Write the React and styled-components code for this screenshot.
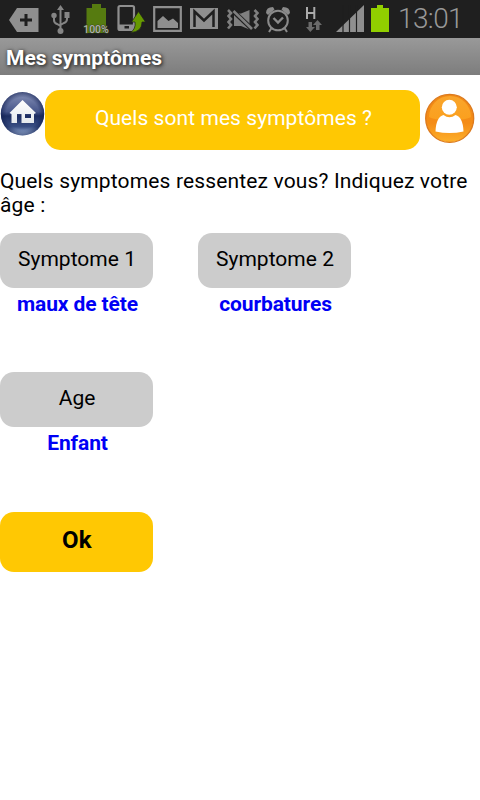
import React from "react";
import styled, { createGlobalStyle } from "styled-components";

const GlobalStyle = createGlobalStyle`
  body {
    margin: 0;
    background: #fff;
    font-family: Roboto, sans-serif;
  }
`;

const Screen = styled.div`
  width: 480px;
  height: 800px;
  overflow: hidden;
  background: #fff;
  color: #000;
`;

const StatusBar = styled.div`
  display: flex;
  height: 38px;
  background: #1f1f1f;
`;

const Icon = styled.svg`
  flex: none;
  display: block;
  height: 38px;
  margin-left: ${(props) => props.$gap}px;
`;

const Clock = styled.span`
  margin-left: 9px;
  color: #989898;
  font-size: 28px;
  font-weight: 300;
  line-height: 37px;
  letter-spacing: -0.6px;
  white-space: nowrap;
`;

const TitleBar = styled.h1`
  height: 37px;
  margin: 0;
  padding-left: 6px;
  background: linear-gradient(#999, #7d7d7d);
  color: #fff;
  font-size: 21px;
  font-weight: 700;
  line-height: 40px;
  text-shadow: 1px 1px 4px #222, 1px 1px 3px #555;
`;

const Header = styled.div`
  display: flex;
  align-items: flex-start;
  padding-top: 15px;
`;

const RoundButton = styled.svg`
  flex: none;
  display: block;
  margin-top: ${(props) => props.$top}px;
  margin-left: ${(props) => props.$left}px;
`;

const Banner = styled.div`
  box-sizing: border-box;
  width: 375px;
  height: 60px;
  padding-left: 2px;
  border-radius: 15px;
  background: #ffc803;
  color: #fff;
  font-size: 21px;
  line-height: 56px;
  text-align: center;
  letter-spacing: 0.06px;
`;

const Question = styled.p`
  margin: 19px 0 16px;
  font-size: 21px;
  line-height: 24px;
  letter-spacing: 0.15px;
`;

const Row = styled.div`
  display: flex;
  gap: 45px;
  height: ${(props) => props.$height}px;
`;

const Field = styled.div`
  width: 153px;
  text-align: center;
`;

const Picker = styled.button`
  display: block;
  width: 153px;
  height: 55px;
  padding: 0 0 3px 1px;
  border: 0;
  border-radius: 14px;
  background: #ccc;
  color: #000;
  font: 21px Roboto, sans-serif;
  letter-spacing: 0.02px;
`;

const Value = styled.div`
  margin-left: 2px;
  color: #0000f5;
  font-size: 21px;
  font-weight: 700;
  line-height: 32px;
  letter-spacing: -0.1px;
  white-space: nowrap;
`;

const OkButton = styled(Picker)`
  height: 60px;
  padding: 0 0 4px 1px;
  background: #ffc803;
  font-size: 24px;
  font-weight: 700;
  letter-spacing: 0.2px;
`;

const StatusIcons = () => (
  <>
    <Icon $gap={9} width="30" viewBox="9 0 30 38">
      <path d="M9 20 17 8H38.500V32H17Z" fill="#8f8f8f" />
      <path d="M26 14V26M20 20H32" stroke="#1f1f1f" strokeWidth="3" />
    </Icon>
    <Icon $gap={12} width="20" viewBox="51 0 20 38">
      <g fill="none" stroke="#858585" strokeWidth="2">
        <path d="M60.500 8V31M54 17V20Q54 23 57 24L60.500 26M67 16V19Q67 22 64 23L60.500 25" />
      </g>
      <g fill="#858585">
        <path d="M60.500 5 64 10H57ZM64.500 12H69.500V18H64.500Z" />
        <circle cx="54" cy="15.500" r="2.700" />
        <circle cx="60.500" cy="31" r="3" />
      </g>
    </Icon>
    <Icon $gap={11} width="28" viewBox="82 0 28 38">
      <path d="M92 4H101V8H106V33H86.500V8H92Z" fill="#567b10" />
      <text
        x="96"
        y="32.500"
        textAnchor="middle"
        fontSize="10.500"
        fontWeight="500"
        fill="#b0b0b0"
        stroke="#3a4a1a"
        strokeWidth="1"
        paintOrder="stroke"
      >
        100%
      </text>
    </Icon>
    <Icon $gap={7} width="29" viewBox="117 0 29 38">
      <path
        d="M118.500 7.500Q118.500 6 120 6H132.500Q134 6 134 7.500V28.500Q134 30 132.500 30H120Q118.500 30 118.500 28.500Z"
        fill="none"
        stroke="#8f8f8f"
        strokeWidth="2.200"
      />
      <path d="M118 24.500H135V30H118Z" fill="#8f8f8f" />
      <path d="M124.500 26H129V28.500H124.500Z" fill="#1f1f1f" />
      <path
        d="M130.500 32.500Q136 29 135 22H131.500L138.500 11.500 145.500 22H142Q142 32 130.500 32.500Z"
        fill="#669900"
        stroke="#1f1f1f"
        strokeWidth="0.700"
      />
    </Icon>
    <Icon $gap={7} width="30" viewBox="153 0 30 38">
      <path d="M154.200 7.200H180.800V30.800H154.200Z" fill="none" stroke="#8f8f8f" strokeWidth="2.200" />
      <path d="M157.500 28V21L163 16 168.500 21 173 18.500 178 23V28Z" fill="#8f8f8f" />
    </Icon>
    <Icon $gap={7} width="28" viewBox="190 0 28 38">
      <path d="M190 8H218V29H190Z" fill="#8f8f8f" />
      <path d="M194.500 27V11.500L204 20.500 213.500 11.500V27" fill="none" stroke="#1f1f1f" strokeWidth="2.500" />
      <path d="M195 9.500H213L204 17Z" fill="#8f8f8f" />
    </Icon>
    <Icon $gap={9} width="32" viewBox="227 0 32 38">
      <path d="M234 13.500H241L249.500 10V29.500L241 26H234Z" fill="#7f7f7f" />
      <path d="M232 10 253 30" stroke="#1f1f1f" strokeWidth="4.500" />
      <g fill="none" stroke="#7f7f7f" strokeWidth="2.600">
        <path d="M233.500 11 252 29" />
        <path d="M228 10 231 13 228.500 16 231 19 228.500 22 231 25 228 28.500" />
        <path d="M254.500 10 257.500 13 255 16 257.500 19 255 22 257.500 25 254.500 28.500" />
      </g>
    </Icon>
    <Icon $gap={7} width="25" viewBox="266 0 25 38">
      <g fill="none" stroke="#8a8a8a" strokeWidth="2">
        <circle cx="278" cy="20.500" r="9.800" />
        <path d="M271.500 28 269 32M284.500 28 287 32" />
        <path d="M273.500 18 278 22.500 283 17.500" strokeWidth="2.400" />
      </g>
      <path d="M266 13Q266 7 273 7L274.500 9.500 268 15ZM290 13Q290 7 283 7L281.500 9.500 288 15Z" fill="#8a8a8a" />
    </Icon>
    <Icon $gap={13} width="18" viewBox="304 0 18 38">
      <path d="M307 7V19M314.300 7V19M307 13H314.300" stroke="#ababab" strokeWidth="2" />
      <path
        d="M308.500 22H312V27H315L310.300 32 306 27H308.500ZM316 30V25H313L317.500 20 322 25H319.500V30Z"
        fill="#6b6b6b"
      />
    </Icon>
    <Icon $gap={14} width="28" viewBox="336 0 28 38">
      <path d="M336 32 364 5V32Z" fill="#8f8f8f" />
      <path d="M343 5V32M349.500 5V32M356.500 5V32" stroke="#1f1f1f" strokeWidth="1.200" />
    </Icon>
    <Icon $gap={7} width="18" viewBox="371 0 18 38">
      <path d="M377 5H383V8H389V32H371V8H377Z" fill="#91cf00" />
    </Icon>
  </>
);

const HomeIcon = () => (
  <RoundButton $top={1} $left={0} width="45" height="46" viewBox="0 91 45 46">
    <defs>
      <linearGradient id="home" x1="0" y1="0" x2="0" y2="1">
        <stop offset="0" stopColor="#8792b8" />
        <stop offset="0.450" stopColor="#47568a" />
        <stop offset="0.550" stopColor="#1d2d61" />
        <stop offset="0.800" stopColor="#3a4f84" />
        <stop offset="1" stopColor="#b5cbea" />
      </linearGradient>
      <radialGradient id="rim">
        <stop offset="0.750" stopColor="#101e50" stopOpacity="0" />
        <stop offset="1" stopColor="#101e50" stopOpacity="0.600" />
      </radialGradient>
      <linearGradient id="wall" x1="0" y1="0" x2="0" y2="1">
        <stop offset="0" stopColor="#fff" />
        <stop offset="1" stopColor="#e5e9ed" />
      </linearGradient>
    </defs>
    <circle cx="22.500" cy="113.800" r="21.700" fill="url(#home)" />
    <circle cx="22.500" cy="113.800" r="21.700" fill="url(#rim)" />
    <path
      d="M22.500 100 36 113 34 114V123H21.500V114H17V123H11.500V114L9.500 113ZM25 114V118H31V114Z"
      fill="url(#wall)"
      fillRule="evenodd"
    />
  </RoundButton>
);

const ProfileIcon = () => (
  <RoundButton $top={3} $left={4} width="52" height="52" viewBox="424 93 52 52">
    <defs>
      <linearGradient id="orange" x1="0" y1="0" x2="0" y2="1">
        <stop offset="0" stopColor="#f28a14" />
        <stop offset="0.600" stopColor="#f48c17" />
        <stop offset="1" stopColor="#fdb02a" />
      </linearGradient>
      <linearGradient id="gloss" x1="0" y1="0" x2="0" y2="1">
        <stop offset="0" stopColor="#f9a52c" />
        <stop offset="1" stopColor="#fba01e" />
      </linearGradient>
    </defs>
    <circle cx="449.700" cy="118.400" r="24" fill="url(#orange)" stroke="#dc7a1e" strokeWidth="1.300" />
    <path d="M429 117A21 21 0 0 1 471 117Q467 120 450 120T429 117Z" fill="url(#gloss)" />
    <circle cx="449.300" cy="107.300" r="7.500" fill="#fff" />
    <path
      d="M435.500 131.500Q436 117 443.500 115Q449.500 119.500 455.500 115Q463 117 463.500 131.500Q449.500 134.500 435.500 131.500Z"
      fill="#fff"
    />
  </RoundButton>
);

const symptoms = [
  { label: "Symptome 1", value: "maux de tête" },
  { label: "Symptome 2", value: "courbatures" },
];

const App = () => {
  return (
    <>
      <GlobalStyle />
      <Screen>
        <StatusBar>
          <StatusIcons />
          <Clock>13:01</Clock>
        </StatusBar>
        <TitleBar>Mes symptômes</TitleBar>
        <Header>
          <HomeIcon />
          <Banner>Quels sont mes symptômes ?</Banner>
          <ProfileIcon />
        </Header>
        <Question>Quels symptomes ressentez vous? Indiquez votre âge :</Question>
        <Row $height={139}>
          {symptoms.map((symptom) => (
            <Field key={symptom.label}>
              <Picker>{symptom.label}</Picker>
              <Value>{symptom.value}</Value>
            </Field>
          ))}
        </Row>
        <Row $height={140}>
          <Field>
            <Picker>Age</Picker>
            <Value>Enfant</Value>
          </Field>
        </Row>
        <OkButton>Ok</OkButton>
      </Screen>
    </>
  );
};

export default App;
